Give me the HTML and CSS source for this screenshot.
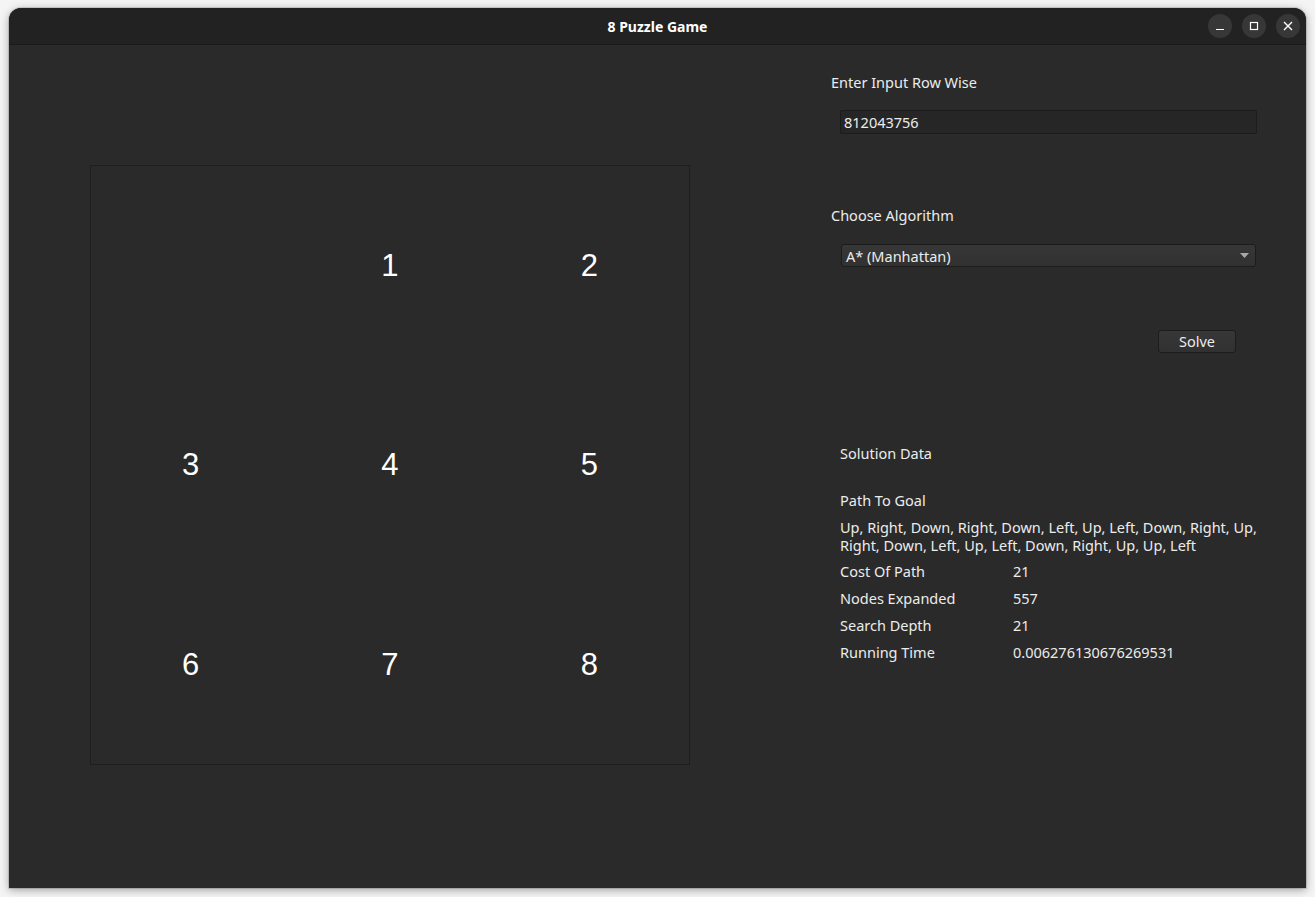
FILE: index.html
```html
<!DOCTYPE html>
<html lang="en">
<head>
<meta charset="utf-8">
<title>8 Puzzle Game</title>
<link rel="stylesheet" href="styles.css">
</head>
<body>
<div class="window">
  <header class="titlebar">
    <div class="title">8 Puzzle Game</div>
    <div class="controls">
      <span class="wbtn"><svg width="24" height="24" viewBox="0 0 24 24"><path d="M8 15.5h8" stroke="#fff" stroke-width="1.2" fill="none"/></svg></span>
      <span class="wbtn"><svg width="24" height="24" viewBox="0 0 24 24"><rect x="8.5" y="8.5" width="7" height="7" stroke="#fff" stroke-width="1.2" fill="none"/></svg></span>
      <span class="wbtn"><svg width="24" height="24" viewBox="0 0 24 24"><path d="M8 8l8 8M16 8l-8 8" stroke="#fff" stroke-width="1.4" fill="none"/></svg></span>
    </div>
  </header>
  <main class="content">
    <section class="left">
      <div class="board">
        <div class="cell"></div>
        <div class="cell">1</div>
        <div class="cell">2</div>
        <div class="cell">3</div>
        <div class="cell">4</div>
        <div class="cell">5</div>
        <div class="cell">6</div>
        <div class="cell">7</div>
        <div class="cell">8</div>
      </div>
    </section>
    <section class="right">
      <div class="label first">Enter Input Row Wise</div>
      <div class="input">812043756</div>
      <div class="label algo">Choose Algorithm</div>
      <div class="combo"><span>A* (Manhattan)</span><svg class="arrow" width="9" height="5" viewBox="0 0 9 5"><path d="M0 0h9L4.5 5z" fill="#a8a8a8"/></svg></div>
      <div class="btnrow"><div class="button">Solve</div></div>
      <div class="solution">
        <div class="heading">Solution Data</div>
        <div class="pathlabel">Path To Goal</div>
        <div class="path">Up, Right, Down, Right, Down, Left, Up, Left, Down, Right, Up,<br>Right, Down, Left, Up, Left, Down, Right, Up, Up, Left</div>
        <div class="stats">
          <div class="stat"><span class="k">Cost Of Path</span><span class="v">21</span></div>
          <div class="stat"><span class="k">Nodes Expanded</span><span class="v">557</span></div>
          <div class="stat"><span class="k">Search Depth</span><span class="v">21</span></div>
          <div class="stat"><span class="k">Running Time</span><span class="v">0.006276130676269531</span></div>
        </div>
      </div>
    </section>
  </main>
</div>
</body>
</html>
```
FILE: styles.css
```css
html, body {
  margin: 0;
  padding: 0;
}
body {
  width: 1315px;
  height: 897px;
  background: #f4f4f4;
  font-family: "Noto Sans", "Open Sans", sans-serif;
  font-size: 14.5px;
  color: #ececec;
  overflow: hidden;
  padding: 8px 0 0 9px;
  box-sizing: border-box;
}
.window {
  width: 1297px;
  height: 880px;
  background: #2a2a2a;
  border-radius: 12px 12px 0 0;
  box-shadow: 0 2px 9px rgba(0,0,0,0.35), 0 0 0 1px rgba(0,0,0,0.12);
  display: flex;
  flex-direction: column;
  overflow: hidden;
}
.titlebar {
  height: 36px;
  flex: none;
  background: #222222;
  border-bottom: 1px solid #1a1a1a;
  display: flex;
  align-items: center;
  justify-content: center;
  position: relative;
}
.title {
  font-weight: bold;
  font-size: 14px;
  color: #ffffff;
}
.controls {
  position: absolute;
  right: 6px;
  top: 6px;
  display: flex;
  gap: 10px;
}
.wbtn {
  width: 24px;
  height: 24px;
  border-radius: 50%;
  background: #373737;
  display: block;
}
.wbtn svg { display: block; }
.content {
  flex: 1;
  display: flex;
}
.left {
  width: 822px;
  flex: none;
  padding: 120px 0 0 81px;
  box-sizing: border-box;
}
.board {
  width: 600px;
  height: 600px;
  box-sizing: border-box;
  border: 1px solid #1e1e1e;
  display: grid;
  grid-template-columns: repeat(3, 1fr);
  grid-template-rows: repeat(3, 1fr);
}
.cell {
  display: flex;
  align-items: center;
  justify-content: center;
  font-family: "Liberation Sans", Arial, sans-serif;
  font-size: 31px;
  color: #ffffff;
  padding-top: 1px;
}
.right {
  flex: 1;
  display: flex;
  flex-direction: column;
  padding-top: 28px;
}
.label {
  line-height: 18px;
  height: 18px;
}
.input {
  margin: 19px 0 0 9px;
  width: 417px;
  height: 24px;
  box-sizing: border-box;
  background: #262626;
  border: 1px solid #1c1c1c;
  border-radius: 2px;
  padding: 0 0 0 3px;
  line-height: 22px;
}
.label.algo {
  margin-top: 72px;
}
.combo {
  margin: 20px 0 0 10px;
  width: 415px;
  height: 23px;
  box-sizing: border-box;
  background: linear-gradient(#373737, #313131);
  border: 1px solid #1c1c1c;
  border-radius: 3px;
  padding: 0 6px 0 4px;
  display: flex;
  align-items: center;
  justify-content: space-between;
}
.btnrow {
  margin: 63px 0 0 327px;
}
.button {
  width: 78px;
  height: 23px;
  box-sizing: border-box;
  background: linear-gradient(#373737, #313131);
  border: 1px solid #1c1c1c;
  border-radius: 3px;
  text-align: center;
  line-height: 21px;
}
.solution {
  margin: 91px 0 0 9px;
}
.heading, .pathlabel {
  line-height: 18px;
}
.pathlabel { margin-top: 29px; }
.path {
  margin-top: 9px;
  line-height: 18px;
  white-space: nowrap;
}
.stats {
  margin-top: 8px;
  display: flex;
  flex-direction: column;
  gap: 9px;
}
.stat {
  display: flex;
  line-height: 18px;
}
.stat .k { width: 173px; }
```
